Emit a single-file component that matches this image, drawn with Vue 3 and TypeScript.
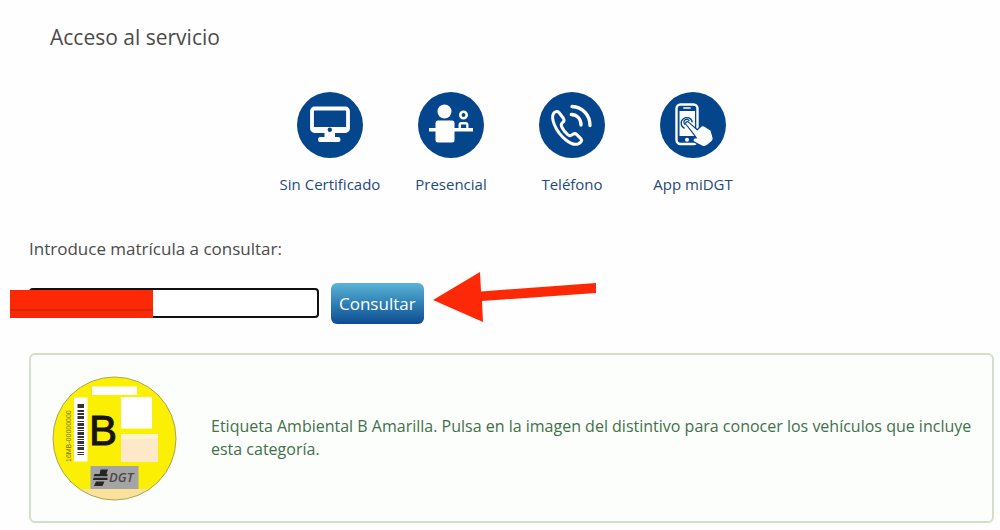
<script setup lang="ts">
import { ref } from 'vue'

type IconName = 'monitor' | 'desk' | 'phone' | 'app'

interface Channel {
  label: string
  icon: IconName
}

const channels: Channel[] = [
  { label: 'Sin Certificado', icon: 'monitor' },
  { label: 'Presencial', icon: 'desk' },
  { label: 'Teléfono', icon: 'phone' },
  { label: 'App miDGT', icon: 'app' },
]

const plate = ref('')

// Bar positions and thicknesses of the sticker's barcode, top to bottom
const bars: [number, number][] = [
  [39, 4], [45, 2], [48, 2], [51, 3], [56, 1], [58, 3], [62, 2], [65, 1],
  [67, 3], [71, 2], [74, 1], [76, 3], [80, 1], [82, 3], [87, 1], [89, 1],
]
</script>

<template>
  <main class="page">
    <h1 class="title">Acceso al servicio</h1>

    <nav class="channels" aria-label="Acceso al servicio">
      <a v-for="c in channels" :key="c.icon" href="#" class="channel">
        <svg class="channel-icon" viewBox="8 7 66 66" aria-hidden="true">
          <circle cx="41" cy="40" r="33" fill="#04458c" />
          <g v-if="c.icon === 'monitor'">
            <rect x="23" y="23.5" width="36" height="22.5" rx="2.5" fill="none" stroke="#fff" stroke-width="3.8" />
            <path d="M24 42h34v4H24zM35.500 47h10.500v5h3.500q2 0 2 2.500t-2 2.500h-18.500q-2 0-2-2.500t2-2.500h4.500z" fill="#fff" />
            <circle cx="40.800" cy="44.800" r="2.200" fill="#04458c" />
          </g>
          <g v-else-if="c.icon === 'desk'">
            <circle cx="34.500" cy="26.500" r="7" fill="#fff" />
            <path d="M28 35.500h14q2.500 0 2.500 2.500v5h4v-3q0-3 3-3h4q3 0 3 3v3h4.500v3.500H44.500V55q0 2.500-2.500 2.500H28q-2.500 0-2.500-2.500v-8.500H19V43h6.500v-5q0-2.500 2.500-2.500z" fill="#fff" />
            <rect x="51" y="39.500" width="5.200" height="3.500" fill="#04458c" />
            <circle cx="53.500" cy="30" r="3.200" fill="none" stroke="#fff" stroke-width="2.600" />
          </g>
          <g v-else-if="c.icon === 'phone'" fill="none" stroke="#fff" stroke-linecap="round" stroke-linejoin="round">
            <path d="M22.500 28.500c1-2 4-2.500 5.500-1l4.500 6c1 1.500.5 3-1 4.200-1.500 1.300-1.600 2.600-.6 4.500 1.500 3 3.300 5.300 5.800 7.500 1.500 1.200 2.800 1.300 4.200.2l1.200-.8c1.300-.8 2.700-.5 3.700.5l4 4c1.700 1.700.3 3.800-2.100 5-4 2-8.500-.2-12.700-3.600-5-4-9.500-10-11.700-15.500-1.700-4.200-2.500-8-.8-11z" stroke-width="3" />
            <path d="M41 21.500c10.500.5 18 8.500 18 19M40.300 29.500c6 .4 9.700 4.500 9.700 10.500" stroke-width="3.300" />
          </g>
          <g v-else>
            <rect x="24.500" y="19.500" width="21" height="39.500" rx="4" fill="none" stroke="#fff" stroke-width="2.400" />
            <path d="M27.500 26H43v25H27.500z" fill="#fff" />
            <path d="M32 23h6" stroke="#fff" stroke-width="1.700" stroke-linecap="round" />
            <circle cx="35" cy="54.800" r="2" fill="#fff" />
            <path d="M32.500 43.300a5.600 5.600 0 1 1 7.800-6M33.300 39.600a2.800 2.800 0 1 1 4-3.500" fill="none" stroke="#04458c" stroke-width="1.300" />
            <path d="M34.200 37q1.300-1 2.600.4l8.400 7.400 4-3.800q2-.9 3.500.2l6.300 4 2.200 8q.3 2-1.500 3.400l-4.800 4q-2.200 1.600-4.500.8L42 57q-2-1.500-.6-3.400 1-1.200 3-.6l-3.300-4.700-7-8.800q-1-1.400.1-2.500z" fill="#fff" stroke="#04458c" stroke-width="1.200" stroke-linejoin="round" />
          </g>
        </svg>
        <span>{{ c.label }}</span>
      </a>
    </nav>

    <form class="search" @submit.prevent>
      <label for="plate" class="search-label">Introduce matrícula a consultar:</label>
      <div class="search-row">
        <div class="field">
          <input id="plate" v-model="plate" type="text" class="plate" autocomplete="off" />
          <span class="cover" aria-hidden="true"></span>
        </div>
        <button type="submit" class="submit">Consultar</button>
        <svg class="arrow" viewBox="0 0 166 52" aria-hidden="true">
          <path d="M1 28 48 0l1 19.500L164 11v10L50 29 51 50z" fill="#fc2806" />
        </svg>
      </div>
    </form>

    <section class="result">
      <a href="#" class="sticker-link" aria-label="Distintivo ambiental B">
        <svg class="sticker" viewBox="12 11 125 125" aria-hidden="true">
          <defs>
            <clipPath id="disc"><circle cx="74.500" cy="73.500" r="61.500" /></clipPath>
          </defs>
          <g clip-path="url(#disc)">
            <path d="M12 11h125v125H12z" fill="#fbf004" />
            <path d="M12 124h125v12H12z" fill="#fbe29c" />
            <path d="M52 21.500h45v8.500H52zM34 32.500h13.500v64H34zM81 32h31v31.500H81z" fill="#fff" />
            <path d="M81 69h37v28H81z" fill="#fde9c8" />
            <path d="M81 69h37v5H81z" fill="#fff4cc" />
            <rect v-for="[y, h] in bars" :key="y" x="37.500" :y="y" width="6.500" :height="h" fill="#333" />
            <path d="M50.500 101h48v23h-48z" fill="#a5a4a5" />
            <path d="M60.500 104.500h7.500l-2 5.500h-6.500zM54.500 109h13v2.200H53.500zM53.500 112.800h14v2.200H53zM56 116.500h8.500l-2 4.500h-8.500z" fill="#262626" />
            <text x="69" y="117" class="brand">DGT</text>
            <text x="49" y="80" class="letter">B</text>
            <text transform="translate(31 97) rotate(-90)" class="serial">16MB-00000000</text>
          </g>
          <circle cx="74.500" cy="73.500" r="61.500" fill="none" stroke="#aaa553" />
        </svg>
      </a>
      <p class="message">
        Etiqueta Ambiental B Amarilla. Pulsa en la imagen del distintivo para conocer los vehículos que incluye esta categoría.
      </p>
    </section>
  </main>
</template>

<style>
body {
  margin: 0;
  background: #fefefe;
}
</style>

<style scoped>
.page {
  box-sizing: border-box;
  padding: 22px 6px 7px 29px;
  font-family: "Open Sans", "Noto Sans", sans-serif;
  font-size: 16px;
  line-height: 23px;
  color: #4b4b4b;
}

.title {
  margin: 0 0 40px 21px;
  font-size: 21px;
  font-weight: 400;
  line-height: 30px;
}

.channels {
  display: flex;
  justify-content: center;
  gap: 1px;
}

.channel {
  display: flex;
  flex-direction: column;
  align-items: center;
  gap: 15px;
  width: 120px;
  color: #1f4a7c;
  font-size: 15px;
  text-decoration: none;
  white-space: nowrap;
}

.channel-icon {
  width: 66px;
  height: 66px;
}

.search {
  margin-top: 41px;
}

.search-label {
  display: block;
  font-size: 17px;
}

.search-row {
  display: flex;
  align-items: center;
  height: 62px;
  margin-top: 12px;
}

.field {
  position: relative;
  width: 290px;
}

.plate {
  display: block;
  box-sizing: border-box;
  width: 100%;
  height: 30px;
  padding: 0 8px;
  border: 2px solid #111;
  border-radius: 4px;
  outline: none;
  background: #fff;
  font: inherit;
}

.cover {
  position: absolute;
  top: 2px;
  left: -19px;
  width: 143px;
  height: 28px;
  background: linear-gradient(#fc2806 19px, #d92608 19px, #d92608 21px, #fc2806 21px);
}

.submit {
  height: 41px;
  margin-left: 12px;
  padding: 1px 8px 0;
  border: 0;
  border-radius: 6px;
  background: linear-gradient(#5bb4d6, #2f80b5 50%, #0d4c8f);
  color: #fff;
  font: inherit;
  font-size: 17px;
}

.arrow {
  align-self: flex-start;
  width: 166px;
  height: 52px;
  margin-left: 8px;
}

.result {
  display: flex;
  align-items: center;
  gap: 34px;
  box-sizing: border-box;
  min-height: 170px;
  margin-top: 19px;
  padding: 20px 20px 20px 21px;
  border: 2px solid #d3dfca;
  border-radius: 6px;
  background: #fbfefb;
  color: #42704a;
}

.sticker-link {
  flex: none;
}

.sticker {
  display: block;
  width: 125px;
  height: 125px;
}

.message {
  margin: 0;
}

.letter {
  font: 42px "Liberation Sans", sans-serif;
  fill: #17150a;
  stroke: #17150a;
  stroke-width: 1px;
}

.brand {
  font: italic 600 13px "Open Sans", sans-serif;
  fill: #4a4a4a;
}

.serial {
  font: 7px "Liberation Sans", sans-serif;
  fill: #77711c;
}
</style>
